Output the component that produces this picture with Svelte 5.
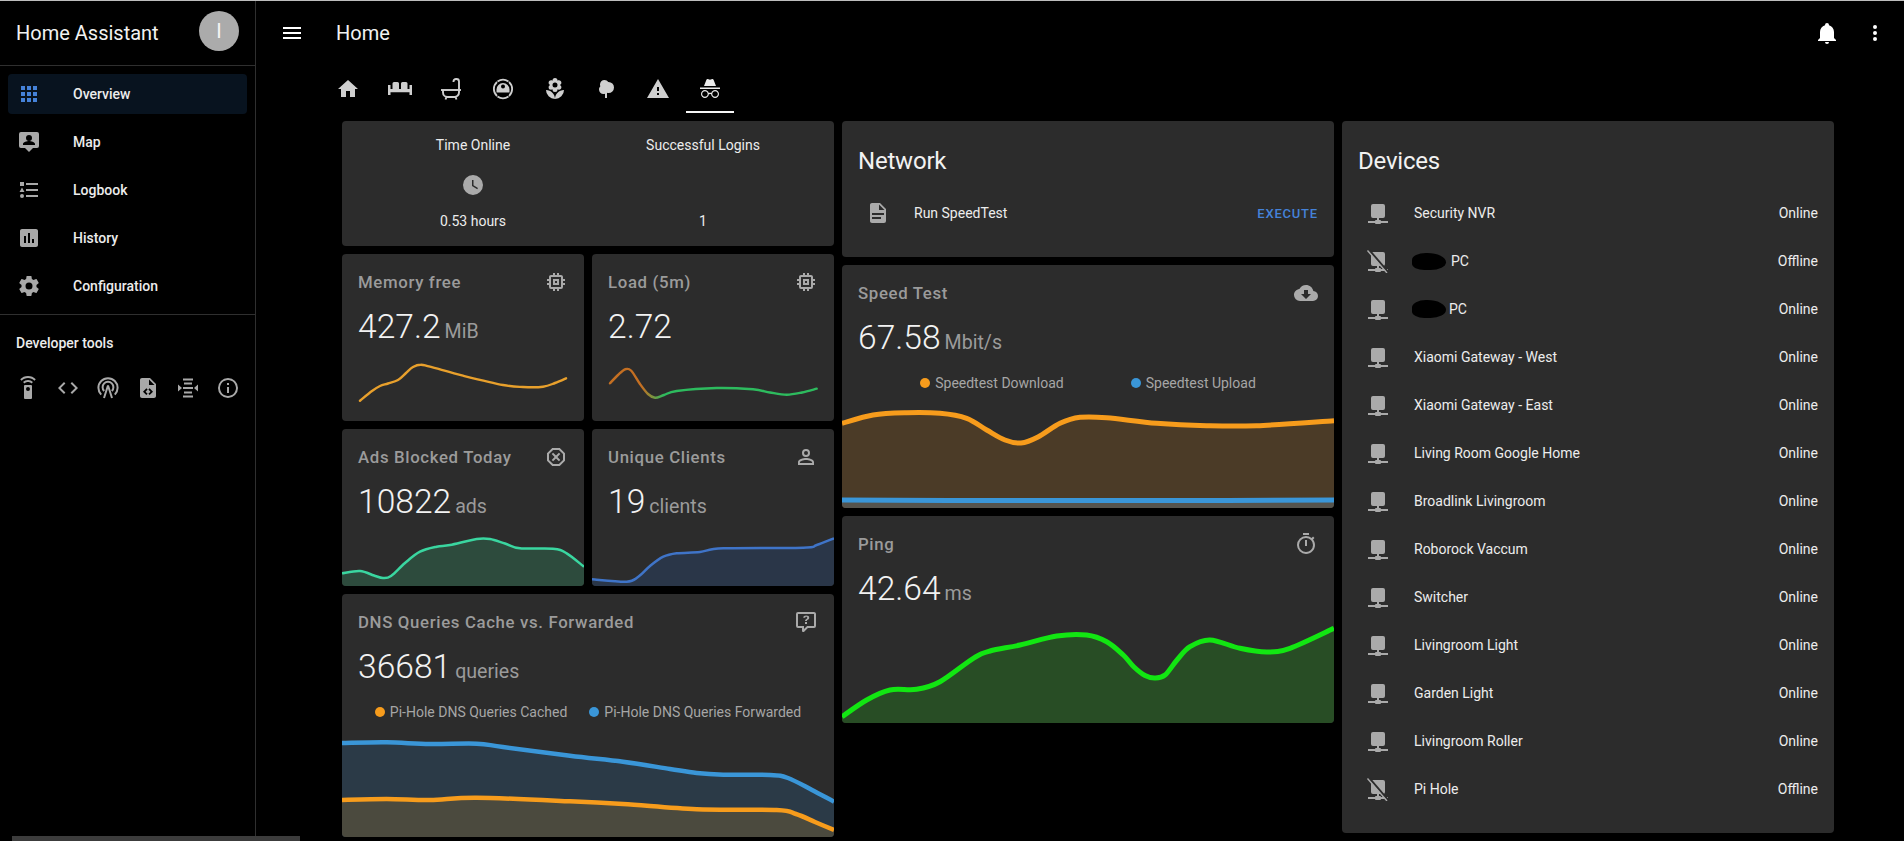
<script>
  const icons = {
    menu: 'M3,6H21V8H3V6M3,11H21V13H3V11M3,16H21V18H3V16Z',
    dots: 'M12,16A2,2 0 0,1 14,18A2,2 0 0,1 12,20A2,2 0 0,1 10,18A2,2 0 0,1 12,16M12,10A2,2 0 0,1 14,12A2,2 0 0,1 12,14A2,2 0 0,1 10,12A2,2 0 0,1 12,10M12,4A2,2 0 0,1 14,6A2,2 0 0,1 12,8A2,2 0 0,1 10,6A2,2 0 0,1 12,4Z',
    bell: 'M21,19V20H3V19L5,17V11C5,7.9 7.03,5.17 10,4.29C10,4.19 10,4.1 10,4A2,2 0 0,1 12,2A2,2 0 0,1 14,4C14,4.1 14,4.19 14,4.29C16.97,5.17 19,7.9 19,11V17L21,19M14,21A2,2 0 0,1 12,23A2,2 0 0,1 10,21',
    apps: 'M16,20H20V16H16M16,14H20V10H16M10,8H14V4H10M16,8H20V4H16M10,14H14V10H10M4,14H8V10H4M4,20H8V16H4M10,20H14V16H10M4,8H8V4H4V8Z',
    map: 'M4,2A2,2 0 0,0 2,4V16A2,2 0 0,0 4,18H8L12,22L16,18H20A2,2 0 0,0 22,16V4A2,2 0 0,0 20,2H4M12,5A3,3 0 0,1 15,8A3,3 0 0,1 12,11A3,3 0 0,1 9,8A3,3 0 0,1 12,5M18,15H6V14C6,12 10,11 12,11C14,11 18,12 18,14V15Z',
    log: 'M5,9.5L7.5,14H2.5L5,9.5M3,4H7V8H3V4M5,20A2,2 0 0,0 7,18A2,2 0 0,0 5,16A2,2 0 0,0 3,18A2,2 0 0,0 5,20M9,5V7H21V5H9M9,19H21V17H9V19M9,13H21V11H9V13Z',
    chart: 'M19 3H5C3.9 3 3 3.9 3 5V19C3 20.1 3.9 21 5 21H19C20.1 21 21 20.1 21 19V5C21 3.9 20.1 3 19 3M9 17H7V10H9V17M13 17H11V7H13V17M17 17H15V13H17V17Z',
    cog: 'M12,15.5A3.5,3.5 0 0,1 8.5,12A3.5,3.5 0 0,1 12,8.5A3.5,3.5 0 0,1 15.5,12A3.5,3.5 0 0,1 12,15.5M19.43,12.97C19.47,12.65 19.5,12.33 19.5,12C19.5,11.67 19.47,11.34 19.43,11L21.54,9.37C21.73,9.22 21.78,8.95 21.66,8.73L19.66,5.27C19.54,5.05 19.27,4.96 19.05,5.05L16.56,6.05C16.04,5.66 15.5,5.32 14.87,5.07L14.5,2.42C14.46,2.18 14.25,2 14,2H10C9.75,2 9.54,2.18 9.5,2.42L9.13,5.07C8.5,5.32 7.96,5.66 7.44,6.05L4.95,5.05C4.73,4.96 4.46,5.05 4.34,5.27L2.34,8.73C2.21,8.95 2.27,9.22 2.46,9.37L4.57,11C4.53,11.34 4.5,11.67 4.5,12C4.5,12.33 4.53,12.65 4.57,12.97L2.46,14.63C2.27,14.78 2.21,15.05 2.34,15.27L4.34,18.73C4.46,18.95 4.73,19.03 4.95,18.95L7.44,17.94C7.96,18.34 8.5,18.68 9.13,18.93L9.5,21.58C9.54,21.82 9.75,22 10,22H14C14.25,22 14.46,21.82 14.5,21.58L14.87,18.93C15.5,18.67 16.04,18.34 16.56,17.94L19.05,18.95C19.27,19.03 19.54,18.95 19.66,18.73L21.66,15.27C21.78,15.05 21.73,14.78 21.54,14.63L19.43,12.97Z',
    remote: 'M12,0C8.96,0 6.21,1.23 4.22,3.22L5.63,4.63C7.26,3 9.5,2 12,2C14.5,2 16.74,3 18.36,4.64L19.77,3.23C17.79,1.23 15.04,0 12,0M7.05,6.05L8.46,7.46C9.37,6.56 10.62,6 12,6C13.38,6 14.63,6.56 15.54,7.46L16.95,6.05C15.68,4.78 13.93,4 12,4C10.07,4 8.32,4.78 7.05,6.05M12,15A2,2 0 0,1 10,13A2,2 0 0,1 12,11A2,2 0 0,1 14,13A2,2 0 0,1 12,15M15,9H9A1,1 0 0,0 8,10V22A1,1 0 0,0 9,23H15A1,1 0 0,0 16,22V10A1,1 0 0,0 15,9Z',
    code: 'M14.6,16.6L19.2,12L14.6,7.4L16,6L22,12L16,18L14.6,16.6M9.4,16.6L4.8,12L9.4,7.4L8,6L2,12L8,18L9.4,16.6Z',
    filecode: 'M14 2H6C4.89 2 4 2.89 4 4V20C4 21.11 4.89 22 6 22H18C19.11 22 20 21.11 20 20V8L14 2M9.54 15.65L11.63 17.74L10.35 19L7 15.65L10.35 12.3L11.63 13.56L9.54 15.65M17 15.65L13.65 19L12.38 17.74L14.47 15.65L12.38 13.56L13.65 12.3L17 15.65M13 9V3.5L18.5 9H13Z',
    lines: 'M2,8.5L6,12L2,15.5ZM22,8.5L18,12L22,15.5ZM7,2.5H17V4.5H7ZM8,6.5H16V8.5H8ZM7,11H17V13H7ZM8,15.5H16V17.5H8ZM7,19.5H17V21.5H7Z',
    info: 'M11,9H13V7H11M12,20C7.59,20 4,16.41 4,12C4,7.59 7.59,4 12,4C16.41,4 20,7.59 20,12C20,16.41 16.41,20 12,20M12,2A10,10 0 0,0 2,12A10,10 0 0,0 12,22A10,10 0 0,0 22,12A10,10 0 0,0 12,2M11,17H13V11H11V17Z',
    home: 'M10,20V14H14V20H19V12H22L12,3L2,12H5V20H10Z',
    bed: 'M0,8H2.5V12H4.5V6.5A1.5,1.5 0 0,1 6,5H9.5A1.5,1.5 0 0,1 11,6.5V12H13V6.5A1.5,1.5 0 0,1 14.5,5H18A1.5,1.5 0 0,1 19.5,6.5V12H21.5V8H24V18H21.5V15.3H2.5V18H0Z',
    flower: 'M3,13A9,9 0 0,0 12,22C12,17 7.97,13 3,13M12,5.5A2.5,2.5 0 0,1 14.5,8A2.5,2.5 0 0,1 12,10.5A2.5,2.5 0 0,1 9.5,8A2.5,2.5 0 0,1 12,5.5M5.6,10.25A2.5,2.5 0 0,0 8.1,12.75C8.63,12.75 9.12,12.58 9.5,12.31C9.5,12.37 9.5,12.43 9.5,12.5A2.5,2.5 0 0,0 12,15A2.5,2.5 0 0,0 14.5,12.5C14.5,12.43 14.5,12.37 14.5,12.31C14.88,12.58 15.37,12.75 15.9,12.75C17.28,12.75 18.4,11.63 18.4,10.25C18.4,9.25 17.81,8.4 16.97,8C17.81,7.6 18.4,6.74 18.4,5.75C18.4,4.37 17.28,3.25 15.9,3.25C15.37,3.25 14.88,3.41 14.5,3.69C14.5,3.63 14.5,3.56 14.5,3.5A2.5,2.5 0 0,0 12,1A2.5,2.5 0 0,0 9.5,3.5C9.5,3.56 9.5,3.63 9.5,3.69C9.12,3.41 8.63,3.25 8.1,3.25A2.5,2.5 0 0,0 5.6,5.75C5.6,6.74 6.19,7.6 7.03,8C6.19,8.4 5.6,9.25 5.6,10.25M12,22A9,9 0 0,0 21,13C16,13 12,17 12,22Z',
    tree: 'M11,21V16.74C10.53,16.91 10.03,17 9.5,17C7,17 5,15 5,12.5C5,11.23 5.5,10.09 6.36,9.27C6.13,8.73 6,8.13 6,7.5C6,5 8,3 10.5,3C12.06,3 13.44,3.8 14.25,5C14.33,5 14.41,5 14.5,5A5.5,5.5 0 0,1 20,10.5A5.5,5.5 0 0,1 14.5,16C14,16 13.5,15.93 13,15.79V21H11Z',
    alert: 'M13,14H11V10H13M13,18H11V16H13M1,21H23L12,2L1,21Z',
    incognito: 'M17.06 13C15.2 13 13.64 14.33 13.24 16.1C12.29 15.69 11.42 15.8 10.76 16.09C10.35 14.31 8.79 13 6.94 13C4.77 13 3 14.79 3 17C3 19.21 4.77 21 6.94 21C9 21 10.68 19.38 10.84 17.32C11.18 17.08 12.07 16.63 13.16 17.34C13.34 19.39 15 21 17.06 21C19.23 21 21 19.21 21 17C21 14.79 19.23 13 17.06 13M6.94 14.2C8.5 14.2 9.74 15.45 9.74 17C9.74 18.55 8.5 19.8 6.94 19.8C5.38 19.8 4.14 18.55 4.14 17C4.14 15.45 5.38 14.2 6.94 14.2M17.06 14.2C18.62 14.2 19.86 15.45 19.86 17C19.86 18.55 18.62 19.8 17.06 19.8C15.5 19.8 14.26 18.55 14.26 17C14.26 15.45 15.5 14.2 17.06 14.2M22 10.5H2V12H22V10.5M15.53 2.63C15.31 2.14 14.75 1.88 14.22 2.05L12 2.79L9.77 2.05L9.72 2.04C9.19 1.89 8.63 2.17 8.43 2.68L6 9H18L15.56 2.68L15.53 2.63Z',
    memory: 'M17,17H7V7H17M21,11V9H19V7C19,5.89 18.1,5 17,5H15V3H13V5H11V3H9V5H7C5.89,5 5,5.89 5,7V9H3V11H5V13H3V15H5V17A2,2 0 0,0 7,19H9V21H11V19H13V21H15V19H17A2,2 0 0,0 19,17V15H21V13H19V11M13,13H11V11H13M15,9H9V15H15V9Z',
    block: 'M8.27,3L3,8.27V15.73L8.27,21H15.73L21,15.73V8.27L15.73,3M9.1,5H14.9L19,9.1V14.9L14.9,19H9.1L5,14.9V9.1M9.12,7.71L7.71,9.12L10.59,12L7.71,14.88L9.12,16.29L12,13.41L14.88,16.29L16.29,14.88L13.41,12L16.29,9.12L14.88,7.71L12,10.59Z',
    account: 'M12,4A4,4 0 0,1 16,8A4,4 0 0,1 12,12A4,4 0 0,1 8,8A4,4 0 0,1 12,4M12,6A2,2 0 0,0 10,8A2,2 0 0,0 12,10A2,2 0 0,0 14,8A2,2 0 0,0 12,6M12,13C14.67,13 20,14.33 20,17V20H4V17C4,14.33 9.33,13 12,13M12,14.9C9.03,14.9 5.9,16.36 5.9,17V18.1H18.1V17C18.1,16.36 14.97,14.9 12,14.9Z',
    question: 'M4,2A2,2 0 0,0 2,4V16A2,2 0 0,0 4,18H8V21A1,1 0 0,0 9,22H9.5C9.75,22 10,21.9 10.2,21.71L13.9,18H20A2,2 0 0,0 22,16V4C22,2.89 21.1,2 20,2H4M4,4H20V16H13.08L10,19.08V16H4V4M12.19,5.5C11.3,5.5 10.59,5.68 10.05,6.04C9.5,6.4 9.22,7 9.27,7.69H11.24C11.24,7.41 11.34,7.2 11.5,7.06C11.7,6.92 11.92,6.85 12.19,6.85C12.5,6.85 12.77,6.93 12.95,7.11C13.13,7.28 13.22,7.5 13.22,7.8C13.22,8.08 13.14,8.33 13,8.54C12.83,8.76 12.62,8.94 12.36,9.08C11.84,9.4 11.5,9.68 11.29,9.92C11.1,10.16 11,10.5 11,11H13C13,10.72 13.05,10.5 13.14,10.32C13.23,10.15 13.4,10 13.66,9.85C14.12,9.64 14.5,9.36 14.79,9C15.08,8.63 15.23,8.24 15.23,7.8C15.23,7.1 14.96,6.54 14.42,6.12C13.88,5.71 13.13,5.5 12.19,5.5M11,12V14H13V12H11Z',
    cloud: 'M17,13L12,18L7,13H10V9H14V13M19.35,10.03C18.67,6.59 15.64,4 12,4C9.11,4 6.6,5.64 5.35,8.03C2.34,8.36 0,10.9 0,14A6,6 0 0,0 6,20H19A5,5 0 0,0 24,15C24,12.36 21.95,10.22 19.35,10.03Z',
    timer: 'M12,20A7,7 0 0,1 5,13A7,7 0 0,1 12,6A7,7 0 0,1 19,13A7,7 0 0,1 12,20M19.03,7.39L20.45,5.97C20,5.46 19.55,5 19.04,4.56L17.62,6C16.07,4.74 14.12,4 12,4A9,9 0 0,0 3,13A9,9 0 0,0 12,22C17,22 21,17.97 21,13C21,10.88 20.26,8.93 19.03,7.39M11,14H13V8H11M15,1H9V3H15V1Z',
    clock: 'M12,2A10,10 0 0,0 2,12A10,10 0 0,0 12,22A10,10 0 0,0 22,12A10,10 0 0,0 12,2M16.2,16.2L11,13V7H12.5V12.2L17,14.9L16.2,16.2Z',
    file: 'M13,9H18.5L13,3.5V9M6,2H14L20,8V20A2,2 0 0,1 18,22H6C4.89,22 4,21.1 4,20V4C4,2.89 4.89,2 6,2M15,18V16H6V18H15M18,14V12H6V14H18Z',
    network: 'M15,20A1,1 0 0,0 14,19H13V17H17A2,2 0 0,0 19,15V5A2,2 0 0,0 17,3H7A2,2 0 0,0 5,5V15A2,2 0 0,0 7,17H11V19H10A1,1 0 0,0 9,20H2V22H9A1,1 0 0,0 10,23H14A1,1 0 0,0 15,22H22V20H15Z'
  };

  const nav = [
    { icon: 'apps', label: 'Overview', active: true },
    { icon: 'map', label: 'Map' },
    { icon: 'log', label: 'Logbook' },
    { icon: 'chart', label: 'History' },
    { icon: 'cog', label: 'Configuration' }
  ];

  const devices = [
    { name: 'Security NVR', state: 'Online' },
    { name: 'PC', state: 'Offline', blob: 'a' },
    { name: 'PC', state: 'Online', blob: 'b' },
    { name: 'Xiaomi Gateway - West', state: 'Online' },
    { name: 'Xiaomi Gateway - East', state: 'Online' },
    { name: 'Living Room Google Home', state: 'Online' },
    { name: 'Broadlink Livingroom', state: 'Online' },
    { name: 'Roborock Vaccum', state: 'Online' },
    { name: 'Switcher', state: 'Online' },
    { name: 'Livingroom Light', state: 'Online' },
    { name: 'Garden Light', state: 'Online' },
    { name: 'Livingroom Roller', state: 'Online' },
    { name: 'Pi Hole', state: 'Offline' }
  ];

  // Catmull-Rom smoothing of a series given in page coordinates, shifted to the chart's origin.
  function line(pts, x0, y0) {
    const p = pts.map(([x, y]) => [x - x0, y - y0]);
    let d = `M${p[0][0]},${p[0][1]}`;
    for (let i = 0; i < p.length - 1; i++) {
      const a = p[i - 1] || p[i], b = p[i], c = p[i + 1], e = p[i + 2] || c;
      const k = 6;
      const c1 = [b[0] + (c[0] - a[0]) / k, b[1] + (c[1] - a[1]) / k];
      const c2 = [c[0] - (e[0] - b[0]) / k, c[1] - (e[1] - b[1]) / k];
      d += `C${c1[0].toFixed(1)},${c1[1].toFixed(1)} ${c2[0].toFixed(1)},${c2[1].toFixed(1)} ${c[0].toFixed(1)},${c[1].toFixed(1)}`;
    }
    return d;
  }
  const area = (d, w, h) => `${d}L${w},${h + 4}L0,${h + 4}Z`;

  const memPts = [[360,400.7],[372,391],[380,386],[388,383.5],[398,380],[406,373],[413,367],[420.7,364.7],[430,366.7],[463,375.7],[503,385],[523,387],[543,386.7],[555,383],[566,378.3]];
  const loadPts = [[610,383.3],[618,375],[625,369.3],[631,370.5],[640,384],[648,394],[655,397.7],[664,395],[676.7,391],[716.7,388],[753,389.3],[770,392.5],[786.7,394.7],[802,392.5],[816.7,388.7]];
  const adsPts = [[342,573.3],[360,571],[374,575.5],[383,578],[391,576],[405,563],[420,551.7],[436.7,546.7],[450,545],[476.7,539],[490,539],[505,543.5],[520,548.3],[553,548.7],[566.7,553.3],[584,566.7]];
  const uniqPts = [[592,579.3],[626.7,581.7],[638,577],[650,566],[663.3,556.7],[676.7,553.3],[700,552],[723.3,548.3],[803.3,547.7],[816.7,545],[834,538.3]];
  const dnsBlue = [[342,743],[386.7,742.3],[430,744],[476.7,743.7],[503,747],[570,755.7],[623,761.7],[670,769],[696.7,773],[723.3,774.7],[770,775],[788,778],[812,790],[834,801.7]];
  const dnsOrange = [[342,800],[386.7,799],[430,800],[476.7,797.7],[570,801.3],[623,804],[696.7,809.3],[776.7,810],[796,814],[815,822],[834,830]];
  const speedOrange = [[842,423.3],[873,415],[906.7,412.7],[940,413.3],[966.7,418.3],[986.7,430],[1005,440],[1021,443],[1038,437],[1060,423.3],[1080,417.3],[1106.7,417.7],[1156.7,423.3],[1206.7,425.7],[1256.7,425.7],[1334,420.7]];
  const speedBlue = [[842,500],[1000,500.5],[1180,500.5],[1334,500]];
  const pingPts = [[842,716.7],[866.7,700],[890,690],[916.7,689.3],[940,681.7],[973.3,658.3],[990,651],[1020,645],[1056.7,636],[1086.7,635],[1106.7,641.7],[1123.3,655],[1134,667],[1145,675.5],[1155,678],[1165,675],[1177,660],[1190,646.7],[1210,640],[1240,648.3],[1266.7,652],[1290,648.3],[1334,628.3]];

  const mem = line(memPts, 342, 350), load = line(loadPts, 592, 350);
  const ads = line(adsPts, 342, 530), uniq = line(uniqPts, 592, 530);
  const dnsB = line(dnsBlue, 342, 735), dnsO = line(dnsOrange, 342, 735);
  const spO = line(speedOrange, 842, 400), spB = line(speedBlue, 842, 400);
  const ping = line(pingPts, 842, 620);
</script>

{#snippet icon(name, cls = '')}
  <svg class="icon {cls}" viewBox="0 0 24 24" aria-hidden="true"><path d={icons[name]} /></svg>
{/snippet}

{#snippet head(title, ic, value, unit)}
  <div class="m-head">
    <span class="m-title">{title}</span>
    {@render icon(ic, 'muted')}
  </div>
  <div class="m-value">{value}{#if unit}<span class="m-unit">{unit}</span>{/if}</div>
{/snippet}

<div class="app">
  <aside class="sidebar">
    <div class="side-head">
      <span class="brand">Home Assistant</span>
      <span class="avatar">I</span>
    </div>
    <nav class="nav">
      {#each nav as n}
        <div class="nav-item" class:active={n.active}>
          {@render icon(n.icon, n.active ? 'blue' : 'side')}
          <span>{n.label}</span>
        </div>
      {/each}
    </nav>
    <div class="dev">
      <div class="dev-title">Developer tools</div>
      <div class="dev-icons">
        <span class="dev-icon">{@render icon('remote', 'side')}</span>
        <span class="dev-icon">{@render icon('code', 'side')}</span>
        <span class="dev-icon">
          <svg class="icon" viewBox="0 0 24 24" aria-hidden="true">
            <g fill="none" stroke="#a9a9a9" stroke-width="2">
              <path d="M5.2,18.6A9.6,9.6 0 1 1 18.8,18.6" />
              <path d="M8.2,15A5.4,5.4 0 1 1 15.8,15" />
              <path d="M12,9.5L8,22M12,9.5L16,22" />
            </g>
          </svg>
        </span>
        <span class="dev-icon">{@render icon('filecode', 'side')}</span>
        <span class="dev-icon">{@render icon('lines', 'side')}</span>
        <span class="dev-icon">{@render icon('info', 'side')}</span>
      </div>
    </div>
  </aside>

  <main class="main">
    <header class="topbar">
      {@render icon('menu', 'white')}
      <span class="page-title">Home</span>
      <span class="spacer"></span>
      {@render icon('bell', 'white')}
      <span class="dots">{@render icon('dots', 'white')}</span>
    </header>

    <div class="tabs">
      <div class="tab">{@render icon('home', 'tabi')}</div>
      <div class="tab">{@render icon('bed', 'tabi')}</div>
      <div class="tab">
        <svg class="icon" viewBox="0 0 24 24" aria-hidden="true">
          <g fill="none" stroke="#cfcfcf" stroke-width="1.9">
            <path d="M2,13H22" />
            <path d="M4,13V15.5A4.5,4.5 0 0 0 8.5,20H15.5A4.5,4.5 0 0 0 20,15.5V13" />
            <path d="M7.5,20L6.5,22.5M16.5,20L17.5,22.5" />
            <path d="M20,13V4.5A2.5,2.5 0 0 0 17.5,2H17A2.5,2.5 0 0 0 14.5,4.5V5" />
          </g>
        </svg>
      </div>
      <div class="tab">
        <svg class="icon" viewBox="0 0 24 24" aria-hidden="true">
          <path fill="none" stroke="#cfcfcf" stroke-width="1.8" d="M18,5A9.4,9.4 0 0 1 18,19M6,19A9.4,9.4 0 0 1 6,5M6.5,4.4A10,10 0 0 1 17.5,4.4M6.5,19.6A10,10 0 0 0 17.5,19.6" />
          <path fill="#cfcfcf" fill-rule="evenodd" d="M5.5,15.5V12.5A6.5,6.5 0 0 1 18.5,12.5V15.5ZM12,7.5A2,2 0 1 0 12,11.5A2,2 0 1 0 12,7.5Z" />
        </svg>
      </div>
      <div class="tab">{@render icon('flower', 'tabi')}</div>
      <div class="tab">{@render icon('tree', 'tabi')}</div>
      <div class="tab">{@render icon('alert', 'tabi')}</div>
      <div class="tab selected">{@render icon('incognito', 'bright')}</div>
    </div>

    <div class="content">
      <div class="col col-a">
        <section class="card glance">
          <div class="g-col">
            <span>Time Online</span>
            {@render icon('clock', 'muted')}
            <span>0.53 hours</span>
          </div>
          <div class="g-col">
            <span>Successful Logins</span>
            <span class="g-gap"></span>
            <span>1</span>
          </div>
        </section>

        <section class="card metric">
          {@render head('Memory free', 'memory', '427.2', 'MiB')}
          <svg class="chart" width="242" height="71" viewBox="0 0 242 71" aria-hidden="true">
            <path d={mem} fill="none" stroke="#e8a02c" stroke-width="2.4" stroke-linecap="round" />
          </svg>
        </section>

        <section class="card metric">
          {@render head('Load (5m)', 'memory', '2.72', '')}
          <svg class="chart" width="242" height="71" viewBox="0 0 242 71" aria-hidden="true">
            <defs>
              <linearGradient id="loadGrad" gradientUnits="userSpaceOnUse" x1="50" y1="0" x2="72" y2="0">
                <stop offset="0" stop-color="#c46f22" />
                <stop offset="1" stop-color="#2dbb5e" />
              </linearGradient>
            </defs>
            <path d={load} fill="none" stroke="url(#loadGrad)" stroke-width="2.4" stroke-linecap="round" />
          </svg>
        </section>

        <section class="card metric">
          {@render head('Ads Blocked Today', 'block', '10822', 'ads')}
          <svg class="chart" width="242" height="56" viewBox="0 0 242 56" aria-hidden="true">
            <path d={area(ads, 242, 56)} fill="#2d4b3d" />
            <path d={ads} fill="none" stroke="#3ad6a0" stroke-width="2.5" />
          </svg>
        </section>

        <section class="card metric">
          {@render head('Unique Clients', 'account', '19', 'clients')}
          <svg class="chart" width="242" height="56" viewBox="0 0 242 56" aria-hidden="true">
            <path d={area(uniq, 242, 56)} fill="#2a3648" />
            <path d={uniq} fill="none" stroke="#3f74c8" stroke-width="2.5" />
          </svg>
        </section>

        <section class="card metric wide">
          {@render head('DNS Queries Cache vs. Forwarded', 'question', '36681', 'queries')}
          <div class="legend dns">
            <span class="leg"><i class="dot orange"></i>Pi-Hole DNS Queries Cached</span>
            <span class="leg"><i class="dot sky"></i>Pi-Hole DNS Queries Forwarded</span>
          </div>
          <svg class="chart" width="492" height="102" viewBox="0 0 492 102" aria-hidden="true">
            <path d={area(dnsB, 492, 102)} fill="#2b3a47" />
            <path d={area(dnsO, 492, 102)} fill="#4b4a3e" />
            <path d={dnsB} fill="none" stroke="#3a96d8" stroke-width="4.5" />
            <path d={dnsO} fill="none" stroke="#f79c1c" stroke-width="4.5" />
          </svg>
        </section>
      </div>

      <div class="col col-b">
        <section class="card entities">
          <h2>Network</h2>
          <div class="row">
            {@render icon('file', 'muted')}
            <span class="row-name">Run SpeedTest</span>
            <span class="exec">EXECUTE</span>
          </div>
        </section>

        <section class="card metric">
          {@render head('Speed Test', 'cloud', '67.58', 'Mbit/s')}
          <div class="legend speed">
            <span class="leg"><i class="dot orange"></i>Speedtest Download</span>
            <span class="leg"><i class="dot sky"></i>Speedtest Upload</span>
          </div>
          <svg class="chart" width="492" height="108" viewBox="0 0 492 108" aria-hidden="true">
            <path d={area(spO, 492, 108)} fill="#4b3b27" />
            <path d={area(spB, 492, 108)} fill="#55544e" />
            <path d={spO} fill="none" stroke="#f79c1c" stroke-width="5" />
            <path d={spB} fill="none" stroke="#3a96d8" stroke-width="5" />
          </svg>
        </section>

        <section class="card metric">
          {@render head('Ping', 'timer', '42.64', 'ms')}
          <svg class="chart" width="492" height="103" viewBox="0 0 492 103" aria-hidden="true">
            <path d={area(ping, 492, 103)} fill="#284d25" />
            <path d={ping} fill="none" stroke="#12e612" stroke-width="5" />
          </svg>
        </section>
      </div>

      <div class="col col-c">
        <section class="card entities">
          <h2>Devices</h2>
          {#each devices as d}
            <div class="row">
              {#if d.state === 'Offline'}
                <svg class="icon" viewBox="0 0 24 24" aria-hidden="true">
                  <path fill="#aaaaaa" d={icons.network} />
                  <path stroke="#2c2c2c" stroke-width="2.2" d="M3.5,1.5L22,23" />
                  <path stroke="#aaaaaa" stroke-width="1.4" d="M1.5,1.5L21,24" />
                </svg>
              {:else}
                {@render icon('network', 'muted')}
              {/if}
              <span class="row-name">{#if d.blob}<i class="blob {d.blob}"></i>{/if}{d.name}</span>
              <span class="row-state">{d.state}</span>
            </div>
          {/each}
        </section>
      </div>
    </div>
  </main>
  <div class="scrollbar"></div>
</div>

<style>
  :global(body) {
    margin: 0;
    background: #000;
    overflow: hidden;
  }
  .app {
    display: flex;
    height: 840px;
    border-top: 1px solid #bdbdbd;
    background: #000;
    color: #ececec;
    font-family: Roboto, "Liberation Sans", sans-serif;
    font-size: 14px;
    overflow: hidden;
  }
  .icon {
    width: 24px;
    height: 24px;
    flex: none;
    display: block;
    fill: #aaaaaa;
  }
  .icon.muted { fill: #aaaaaa; }
  .icon.side { fill: #a9a9a9; }
  .icon.blue { fill: #4582d8; }
  .icon.white { fill: #fff; }
  .icon.tabi { fill: #cfcfcf; }
  .icon.bright { fill: #ececec; }

  .sidebar {
    width: 255px;
    flex: none;
    border-right: 1px solid #2f2f2f;
    display: flex;
    flex-direction: column;
  }
  .side-head {
    height: 65px;
    box-sizing: border-box;
    display: flex;
    align-items: center;
    justify-content: space-between;
    padding: 0 16px;
    border-bottom: 1px solid #2f2f2f;
  }
  .brand { font-size: 20px; color: #f2f2f2; }
  .avatar {
    width: 40px;
    height: 40px;
    border-radius: 50%;
    background: #ababab;
    color: #f5f5f5;
    display: flex;
    align-items: center;
    justify-content: center;
    font-size: 20px;
    margin-bottom: 4px;
  }
  .nav {
    display: flex;
    flex-direction: column;
    gap: 8px;
    padding: 8px;
    border-bottom: 1px solid #2f2f2f;
  }
  .nav-item {
    height: 40px;
    display: flex;
    align-items: center;
    gap: 32px;
    padding-left: 9px;
    border-radius: 4px;
    font-weight: 500;
  }
  .nav-item.active { background: #08131f; }
  .dev { padding: 20px 16px 0; }
  .dev-title { font-weight: 500; line-height: 17px; }
  .dev-icons {
    display: flex;
    margin: 24px 0 0 -8px;
  }
  .dev-icon {
    width: 40px;
    flex: none;
    display: flex;
    justify-content: center;
  }

  .main { flex: 1; min-width: 0; }
  .topbar {
    height: 64px;
    display: flex;
    align-items: center;
    padding: 0 17px 0 24px;
  }
  .page-title { font-size: 20px; margin-left: 32px; color: #f2f2f2; }
  .spacer { flex: 1; }
  .dots { margin-left: 24px; }

  .tabs {
    height: 48px;
    display: flex;
    gap: 3.7px;
    padding-left: 68px;
  }
  .tab {
    width: 48px;
    box-sizing: border-box;
    display: flex;
    align-items: center;
    justify-content: center;
    padding-top: 2px;
    border-bottom: 2px solid transparent;
  }
  .tab.selected { border-bottom-color: #f5f5f5; }

  .content {
    display: grid;
    grid-template-columns: repeat(3, 492px);
    gap: 8px;
    padding: 8px 0 0 86px;
    align-items: start;
  }
  .col { display: grid; gap: 8px; }
  .col-a {
    grid-template-columns: 242px 242px;
    grid-template-rows: 125px 167px 157px 243px;
  }
  .col-a .glance, .col-a .wide { grid-column: 1 / 3; }
  .col-b { grid-template-rows: 136px 243px 207px; }

  .card {
    background: #2c2c2c;
    border-radius: 4px;
    overflow: hidden;
    box-sizing: border-box;
  }
  .glance {
    display: grid;
    grid-template-columns: 1fr 1fr;
    padding: 16px 16px 0;
  }
  .g-col {
    display: flex;
    flex-direction: column;
    align-items: center;
  }
  .g-col span { line-height: 17px; }
  .g-col :global(.icon) { margin: 19px 0 16px; }
  .g-gap { height: 59px; }

  .metric {
    display: flex;
    flex-direction: column;
  }
  .m-head {
    display: flex;
    align-items: center;
    justify-content: space-between;
    padding: 16px 16px 0;
    height: 24px;
  }
  .m-title {
    font-size: 16.8px;
    font-weight: 500;
    letter-spacing: 0.65px;
    color: #9b9b9b;
  }
  .m-value {
    margin-top: 13px;
    padding-left: 16px;
    height: 40px;
    line-height: 40px;
    font-size: 33.6px;
    font-weight: 300;
    color: #f2f2f2;
    white-space: nowrap;
  }
  .m-unit {
    font-size: 19.6px;
    font-weight: 400;
    color: #9b9b9b;
    margin-left: 4px;
  }
  .chart {
    display: block;
    margin-top: auto;
    flex: none;
  }
  .legend {
    display: flex;
    justify-content: center;
    margin-top: 15px;
    height: 20px;
    align-items: center;
    color: #a6a6a6;
  }
  .legend.speed { gap: 67px; }
  .legend.dns { gap: 22px; }
  .leg { display: flex; align-items: center; gap: 5px; }
  .dot {
    width: 10px;
    height: 10px;
    border-radius: 50%;
  }
  .dot.orange { background: #f79c1c; }
  .dot.sky { background: #3a96d8; }

  .entities { padding-bottom: 20px; }
  .col-c .entities { height: 712px; }
  h2 {
    margin: 0;
    height: 68px;
    padding: 25px 16px 0;
    box-sizing: border-box;
    font-size: 24px;
    font-weight: 400;
    line-height: 30px;
    color: #f2f2f2;
    letter-spacing: -0.2px;
  }
  .row {
    height: 48px;
    display: flex;
    align-items: center;
    padding: 0 16px 0 24px;
  }
  .row-name {
    margin-left: 24px;
    flex: 1;
    display: flex;
    align-items: center;
  }
  .exec {
    color: #4582d8;
    font-size: 13px;
    font-weight: 500;
    letter-spacing: 0.8px;
  }
  .blob {
    display: block;
    background: #000;
    height: 17px;
    width: 34px;
    border-radius: 45% 60% 50% 40%;
    margin-left: -2px;
  }
  .blob.a { margin-right: 5px; }
  .blob.b { margin-right: 3px; height: 18px; }
  .scrollbar {
    position: fixed;
    left: 12px;
    bottom: 0;
    width: 288px;
    height: 5px;
    background: #3c3c3c;
  }
</style>
